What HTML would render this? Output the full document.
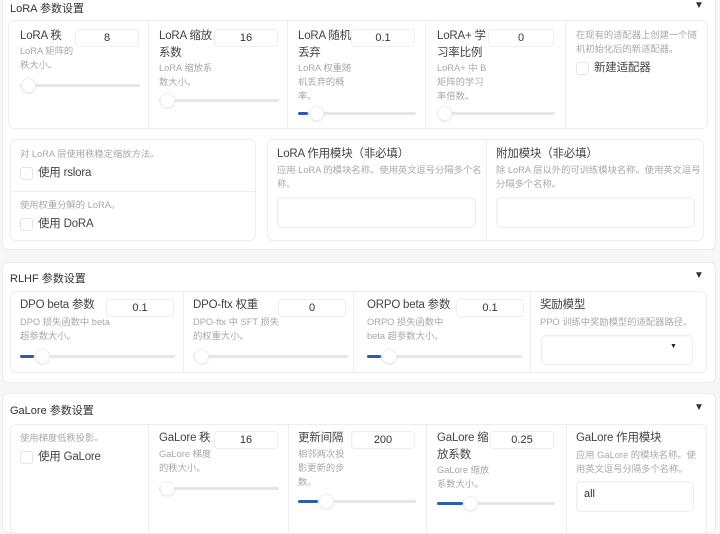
<!DOCTYPE html>
<html><head><meta charset="utf-8"><style>
*{box-sizing:border-box;margin:0;padding:0}
body{width:720px;height:518px;overflow:hidden;background:#f7f7f8;font-family:"Liberation Sans","Noto Sans CJK SC",sans-serif;position:relative;color:#3a3a3a}
.a{position:absolute}
.sec{position:absolute;left:2px;width:714px;background:#fff;border:1px solid #ececec;border-radius:6px}
.ttl{position:absolute;font-size:11px;color:#333;white-space:nowrap}
.arr{position:absolute;font-size:10px;color:#333}
.row{position:absolute;border:1px solid #eee;border-radius:6px;background:#fff}
.col{position:absolute;top:0;bottom:0;border-right:1px solid #eee}
.lb{position:absolute;font-size:11.5px;line-height:17px;color:#444;white-space:nowrap;z-index:2;letter-spacing:-0.2px}
.ds{position:absolute;font-size:9.3px;line-height:14px;color:#a8a8a8;white-space:nowrap}
.num{position:absolute;height:18px;border:1px solid #eee;border-radius:4px;font-size:11px;line-height:16px;text-align:center;color:#333;background:#fff}
.tr{position:absolute;height:3px;background:#e6e6e6;border-radius:2px}
.fl{position:absolute;height:3px;background:#2a5db0;border-radius:2px}
.th{position:absolute;width:15px;height:15px;border-radius:50%;background:#fff;border:1px solid #eee;box-shadow:0 1px 2px rgba(0,0,0,.08)}
.cb{position:absolute;width:13px;height:13px;border:1px solid #e4e4e4;border-radius:3px;background:#fff}
.ta{position:absolute;border:1px solid #eee;border-radius:5px;background:#fff;box-shadow:inset 0 1px 2px rgba(0,0,0,.03)}
</style></head><body>

<!-- Section 1 -->
<div class="sec" style="top:-4px;height:254px"></div>
<div class="ttl" style="left:10px;top:0px">LoRA 参数设置</div>
<div class="arr" style="left:694px;top:0px">▼</div>
<div class="row" style="left:8px;top:20px;width:700px;height:109px">
 <div class="col" style="left:0;width:140px"></div>
 <div class="col" style="left:140px;width:139px"></div>
 <div class="col" style="left:279px;width:138px"></div>
 <div class="col" style="left:417px;width:140px"></div>
</div>
<div class="lb" style="left:20px;top:28px">LoRA 秩</div>
<div class="num" style="left:75px;top:29px;width:64px">8</div>
<div class="ds" style="left:20px;top:44px">LoRA 矩阵的<br>秩大小。</div>
<div class="tr" style="left:20px;top:84px;width:120px"></div>
<div class="th" style="left:21px;top:78px"></div>

<div class="lb" style="left:159px;top:28px">LoRA 缩放<br>系数</div>
<div class="num" style="left:214px;top:29px;width:64px">16</div>
<div class="ds" style="left:159px;top:61px">LoRA 缩放系<br>数大小。</div>
<div class="tr" style="left:159px;top:99px;width:120px"></div>
<div class="th" style="left:160px;top:93px"></div>

<div class="lb" style="left:298px;top:28px">LoRA 随机<br>丢弃</div>
<div class="num" style="left:351px;top:29px;width:64px">0.1</div>
<div class="ds" style="left:298px;top:61px">LoRA 权重随<br>机丢弃的概<br>率。</div>
<div class="tr" style="left:298px;top:112px;width:118px"></div>
<div class="fl" style="left:298px;top:112px;width:10px"></div>
<div class="th" style="left:309px;top:106px"></div>

<div class="lb" style="left:437px;top:28px">LoRA+ 学<br>习率比例</div>
<div class="num" style="left:488px;top:29px;width:66px">0</div>
<div class="ds" style="left:437px;top:61px">LoRA+ 中 B<br>矩阵的学习<br>率倍数。</div>
<div class="tr" style="left:437px;top:112px;width:118px"></div>
<div class="th" style="left:437px;top:106px"></div>

<div class="ds" style="left:576px;top:28px">在现有的适配器上创建一个随<br>机初始化后的新适配器。</div>
<div class="cb" style="left:576px;top:62px"></div>
<div class="lb" style="left:594px;top:60px">新建适配器</div>

<div class="row" style="left:10px;top:139px;width:246px;height:102px">
 <div class="a" style="left:0;right:0;top:51px;border-top:1px solid #eee"></div>
</div>
<div class="ds" style="left:20px;top:147px">对 LoRA 层使用秩稳定缩放方法。</div>
<div class="cb" style="left:20px;top:167px"></div>
<div class="lb" style="left:38px;top:165px">使用 rslora</div>
<div class="ds" style="left:20px;top:198px">使用权重分解的 LoRA。</div>
<div class="cb" style="left:20px;top:218px"></div>
<div class="lb" style="left:38px;top:216px">使用 DoRA</div>

<div class="row" style="left:267px;top:139px;width:437px;height:102px">
 <div class="col" style="left:0;width:219px"></div>
</div>
<div class="lb" style="left:277px;top:146px">LoRA 作用模块（非必填）</div>
<div class="ds" style="left:277px;top:163px">应用 LoRA 的模块名称。使用英文逗号分隔多个名<br>称。</div>
<div class="ta" style="left:277px;top:197px;width:199px;height:31px"></div>
<div class="lb" style="left:496px;top:146px">附加模块（非必填）</div>
<div class="ds" style="left:496px;top:163px">除 LoRA 层以外的可训练模块名称。使用英文逗号<br>分隔多个名称。</div>
<div class="ta" style="left:496px;top:197px;width:199px;height:31px"></div>

<!-- Section 2 -->
<div class="sec" style="top:262px;height:121px"></div>
<div class="ttl" style="left:10px;top:270px">RLHF 参数设置</div>
<div class="arr" style="left:694px;top:270px">▼</div>
<div class="row" style="left:10px;top:291px;width:697px;height:82px">
 <div class="col" style="left:0;width:173px"></div>
 <div class="col" style="left:173px;width:170px"></div>
 <div class="col" style="left:343px;width:177px"></div>
</div>
<div class="lb" style="left:20px;top:297px">DPO beta 参数</div>
<div class="num" style="left:106px;top:299px;width:68px">0.1</div>
<div class="ds" style="left:20px;top:315px">DPO 损失函数中 beta<br>超参数大小。</div>
<div class="tr" style="left:20px;top:355px;width:155px"></div>
<div class="fl" style="left:20px;top:355px;width:14px"></div>
<div class="th" style="left:35px;top:349px"></div>

<div class="lb" style="left:193px;top:297px">DPO-ftx 权重</div>
<div class="num" style="left:278px;top:299px;width:68px">0</div>
<div class="ds" style="left:193px;top:315px">DPO-ftx 中 SFT 损失<br>的权重大小。</div>
<div class="tr" style="left:193px;top:355px;width:155px"></div>
<div class="th" style="left:194px;top:349px"></div>

<div class="lb" style="left:367px;top:297px">ORPO beta 参数</div>
<div class="num" style="left:456px;top:299px;width:68px">0.1</div>
<div class="ds" style="left:367px;top:315px">ORPO 损失函数中<br>beta 超参数大小。</div>
<div class="tr" style="left:367px;top:355px;width:155px"></div>
<div class="fl" style="left:367px;top:355px;width:14px"></div>
<div class="th" style="left:382px;top:349px"></div>

<div class="lb" style="left:540px;top:297px">奖励模型</div>
<div class="ds" style="left:540px;top:315px">PPO 训练中奖励模型的适配器路径。</div>
<div class="ta" style="left:541px;top:335px;width:152px;height:30px"></div>
<div class="a" style="left:670px;top:343px;font-size:7px;color:#222">▼</div>

<!-- Section 3 -->
<div class="sec" style="top:393px;height:140px"></div>
<div class="ttl" style="left:10px;top:402px">GaLore 参数设置</div>
<div class="arr" style="left:694px;top:402px">▼</div>
<div class="row" style="left:10px;top:424px;width:697px;height:110px">
 <div class="col" style="left:0;width:138px"></div>
 <div class="col" style="left:138px;width:140px"></div>
 <div class="col" style="left:278px;width:138px"></div>
 <div class="col" style="left:416px;width:140px"></div>
</div>
<div class="ds" style="left:20px;top:431px">使用梯度低秩投影。</div>
<div class="cb" style="left:20px;top:451px"></div>
<div class="lb" style="left:38px;top:449px">使用 GaLore</div>

<div class="lb" style="left:159px;top:430px">GaLore 秩</div>
<div class="num" style="left:214px;top:431px;width:64px">16</div>
<div class="ds" style="left:159px;top:447px">GaLore 梯度<br>的秩大小。</div>
<div class="tr" style="left:159px;top:487px;width:120px"></div>
<div class="th" style="left:160px;top:481px"></div>

<div class="lb" style="left:298px;top:430px">更新间隔</div>
<div class="num" style="left:351px;top:431px;width:64px">200</div>
<div class="ds" style="left:298px;top:447px">相邻两次投<br>影更新的步<br>数。</div>
<div class="tr" style="left:298px;top:500px;width:118px"></div>
<div class="fl" style="left:298px;top:500px;width:20px"></div>
<div class="th" style="left:319px;top:494px"></div>

<div class="lb" style="left:437px;top:430px">GaLore 缩<br>放系数</div>
<div class="num" style="left:490px;top:431px;width:64px">0.25</div>
<div class="ds" style="left:437px;top:463px">GaLore 缩放<br>系数大小。</div>
<div class="tr" style="left:437px;top:502px;width:118px"></div>
<div class="fl" style="left:437px;top:502px;width:26px"></div>
<div class="th" style="left:463px;top:496px"></div>

<div class="lb" style="left:576px;top:430px">GaLore 作用模块</div>
<div class="ds" style="left:576px;top:448px">应用 GaLore 的模块名称。使<br>用英文逗号分隔多个名称。</div>
<div class="ta" style="left:576px;top:481px;width:118px;height:31px"></div>
<div class="a" style="left:584px;top:488px;font-size:11px;color:#333">all</div>
</body></html>
